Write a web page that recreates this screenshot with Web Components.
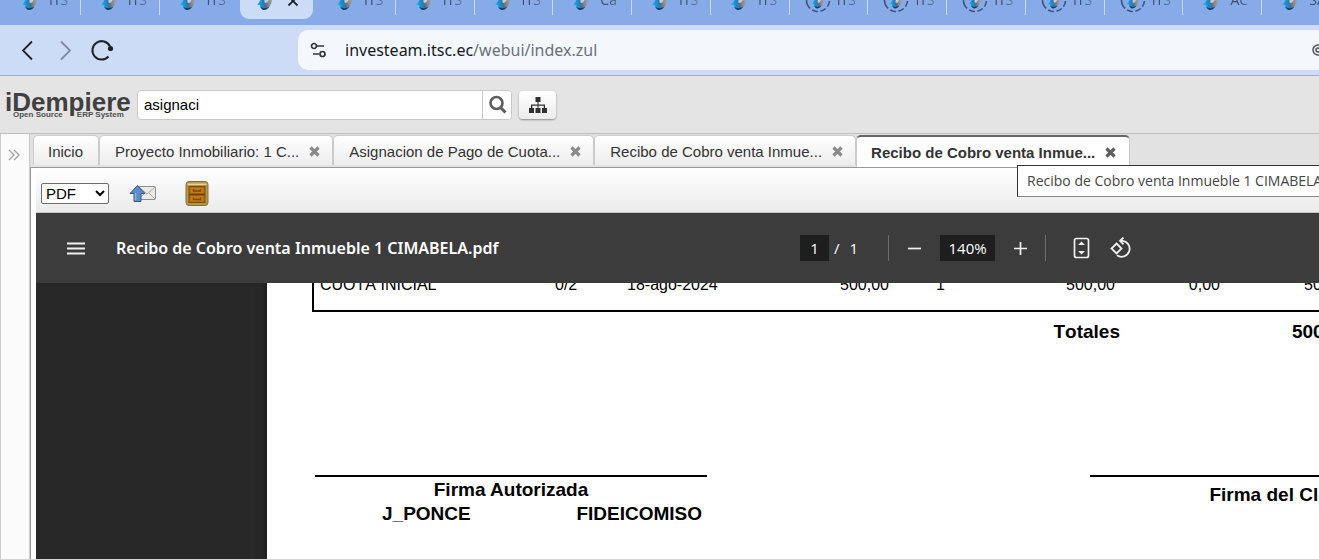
<!DOCTYPE html>
<html lang="es">
<head>
<meta charset="utf-8">
<title>iDempiere</title>
<style>
html,body{height:100%;margin:0}
body{font-family:"Liberation Sans",Arial,sans-serif;overflow:hidden;background:#fff}
</style>
</head>
<body>
<x-window></x-window>
<script>
const define=(name,html)=>{
  const t=document.createElement('template');
  t.innerHTML=html;
  customElements.define(name,class extends HTMLElement{
    constructor(){super();this.attachShadow({mode:'open'}).append(t.content.cloneNode(true));}
  });
};

define('browser-tab',`
<style>
:host{display:flex;align-items:center;height:35px;min-width:0;font:14px "Open Sans",sans-serif;color:#3f4f6c}
.box{display:flex;align-items:center;gap:11px;height:35px;padding-left:20px;flex:1;min-width:0;overflow:hidden}
svg{flex:none;overflow:visible}
.ring{display:none}
:host([loading]) .ring{display:block}
:host([loading]) .mark{transform:scale(.8);transform-origin:8px 8px}
.t{flex:none;width:20px;padding-bottom:5px;overflow:hidden;white-space:nowrap;-webkit-mask:linear-gradient(90deg,#000 40%,#0006);mask:linear-gradient(90deg,#000 40%,#0006)}
.sep{width:1px;height:26px;background:#c9dbf8}
button{display:none;border:0;background:none;padding:0 0 4px;width:14px;height:18px}
:host([active]) .box{background:#ccdcf7;border-radius:9px;margin:0 4px 0 2px;padding-left:17px;gap:13px}
:host([active]) .t,:host([active]) .sep,:host([before]) .sep{display:none}
:host([active]) button{display:block}
</style>
<div class="box">
<svg width="16" height="16" viewBox="0 0 16 16">
<defs><linearGradient id="g" x1="0" x2="1" y1=".5" y2=".3"><stop offset="0" stop-color="#18b4f4"/><stop offset=".3" stop-color="#158fd0"/><stop offset=".5" stop-color="#4b6b8c"/><stop offset=".7" stop-color="#85868c"/><stop offset="1" stop-color="#a5a3a6"/></linearGradient></defs>
<g class="mark"><path d="M0 10.500C2 9.500 3 6 6 3C9 0 13 0 14.500 2C15.500 5 15 9 13 12C11 15 8.500 16 6.500 16C4.500 15 3 13.500 3 11.200Z" fill="url(#g)"/><path d="M8.500 3C7.500 5.500 7 7 7.800 9C9.500 9.500 11.500 7.500 12 4.500Z" fill="#b9cbe8"/><path d="M3.200 12.500C5 14.500 9 14.800 12.300 12.800C10.500 15.300 8.500 16 6.500 16C4.800 15.300 3.600 14 3.200 12.500Z" fill="#103d66"/></g>
<circle class="ring" cx="8" cy="6" r="11.500" fill="none" stroke="#3f5578" stroke-width="1.600" stroke-dasharray="6 2.500 6 2.500 6 2.500 20 2.500 20 4" transform="rotate(5 8 6)"/></svg>
<span class="t"><slot></slot></span>
<button aria-label="Cerrar"><svg width="14" height="14" viewBox="0 0 14 14" style="display:block"><path d="M2.500 3.500l9 9M11.500 3.500l-9 9" stroke="#1c2230" stroke-width="1.800"/></svg></button>
</div><span class="sep"></span>`);

define('tab-strip',`
<style>
:host{display:block;height:25px;overflow:hidden;background:#86abe8}
nav{display:grid;grid-template-columns:repeat(17,minmax(0,1fr));margin:-16px -22px 0 2px}
</style><nav><slot></slot></nav>`);

define('address-bar',`
<style>
:host{display:flex;align-items:center;height:50px;background:#ccdcf7;border-bottom:1px solid #9db0d0;padding-left:16px;overflow:hidden;font:16px "Noto Sans",sans-serif}
button{border:0;background:none;padding:0;width:24px;height:24px;margin-right:13px;flex:none}
svg{display:block}
.f{flex:1;min-width:0;margin-left:171px;height:40px;border-radius:10px 0 0 10px;background:#f4f8fd;display:flex;align-items:center;color:#6c7178;overflow:hidden}
.f .s{margin:0 18px 0 12px}
a{color:inherit;text-decoration:none;flex:1;white-space:nowrap}
b{font-weight:400;color:#15181e}
.end{margin-right:-6px}
</style>
<button aria-label="Atrás"><svg width="24" height="24" viewBox="0 0 24 24" fill="none" stroke="#1f2229" stroke-width="1.800"><path d="M16 3.500L7 12.500l9 9"/></svg></button>
<button aria-label="Adelante"><svg width="24" height="24" viewBox="0 0 24 24" fill="none" stroke="#8089a0" stroke-width="1.800"><path d="M8 3.500l9 9-9 9"/></svg></button>
<button aria-label="Recargar"><svg width="24" height="24" viewBox="0 0 24 24" fill="none" stroke="#1f2229" stroke-width="2"><path d="M18.500 18.500A9.200 9.200 0 1 1 20 8.500"/><circle cx="20.500" cy="10.500" r="2.600" fill="#1f2229" stroke="none"/></svg></button>
<div class="f"><svg class="s" width="17" height="16" viewBox="0 0 17 16" fill="none" stroke="#30343b" stroke-width="1.700"><circle cx="4" cy="4" r="2.500"/><path d="M7 4h7M3 12h6"/><circle cx="12.500" cy="12" r="2.500"/></svg>
<a href="#"><b>investeam.itsc.ec</b>/webui/index.zul</a>
<svg class="end" width="14" height="14" viewBox="1 1 14 14" fill="none" stroke="#4c5057" stroke-width="1.500"><circle cx="8" cy="8" r="5"/><circle cx="8" cy="8" r="2"/></svg></div>`);

define('brand-logo',`
<style>
:host{display:block;width:126px;height:30px;color:#404040;font-weight:700}
.n{font-size:26px;line-height:24px;height:21px}
.s{font-size:8px;line-height:8px;padding-left:8px;display:flex;gap:14px;white-space:nowrap;color:#505050}
</style><div class="n">iDempiere</div><div class="s"><span>Open Source</span><span>ERP System</span></div>`);

define('app-header',`
<style>
:host{display:flex;align-items:center;height:57px;background:#e4e4e4;border-bottom:1px solid #bdbdbd;padding-left:5px}
.q{display:flex;margin:0 7px 0 6px;height:30px;box-sizing:border-box;border:1px solid #c9c9c9;border-radius:4px;background:#fff;overflow:hidden}
input{border:0;outline:0;width:332px;padding:0 6px;font:15px "Liberation Sans",Arial,sans-serif;color:#000;background:none}
.q button{border:0;border-left:1px solid #c9c9c9;background:#fff;width:29px;padding:0 0 0 5px}
svg{display:block}
.m{border:0;border-radius:4px;background:linear-gradient(#fff,#ececec);width:37px;height:28px;padding:0 0 0 10px;box-shadow:0 1px 2px #0006}
</style>
<brand-logo></brand-logo>
<div class="q"><input aria-label="Buscar" value="asignaci"><button aria-label="Buscar"><svg width="19" height="19" viewBox="0 0 19 19" fill="none" stroke="#5c5c5c"><circle cx="8.500" cy="8" r="6" stroke-width="2.600"/><path d="M12.500 12.500l5 5" stroke-width="3"/></svg></button></div>
<button class="m" aria-label="Menú"><svg width="18" height="16" viewBox="0 0 18 16" fill="#303030"><path d="M6.500 0h5v5h-2v2.500H16V11h2v5h-5v-5h1.700V8.700H9.500V11h2v5h-5v-5h2V8.700H3.300V11H5v5H0v-5h2V7.500h6.500V5h-2z"/></svg></button>`);

define('window-tab',`
<style>
:host{display:flex;align-items:center;box-sizing:border-box;height:30px;position:relative;border:1px solid #cbcbcb;border-bottom:0;border-radius:5px 5px 0 0;background:linear-gradient(#fff,#ededed);padding:2px 12px 0 15px;gap:10px;white-space:nowrap;font-size:15px;color:#333}
:host([active]){height:32px;border-top:2px solid #666;background:#fff;font-weight:700;z-index:1;padding:0 13px 0 14px}
:host([plain]){padding:2px 15px 0 14px}
button{border:0;background:none;padding:0}
:host([plain]) button{display:none}
svg{display:block;color:#8a8a8a}
:host([active]) svg{color:#5f5f5f}
</style><span><slot></slot></span><button aria-label="Cerrar"><svg width="11" height="11" viewBox="0 0 11 11"><path d="M1.500 1.500l8 8M9.500 1.500l-8 8" stroke="currentColor" stroke-width="3.200"/></svg></button><slot name="tip"></slot>`);

define('tool-tip',`
<style>:host{position:absolute;left:160px;top:28px;z-index:5;box-sizing:border-box;height:32px;padding:0 9px;border:1px solid #333;border-bottom-color:#888;background:#fff;color:#444;font:400 14px/30px "Open Sans",sans-serif;white-space:nowrap}</style><slot></slot>`);

define('report-toolbar',`
<style>
:host{display:flex;align-items:center;height:45px;padding:7px 0 0 5px;box-sizing:border-box;border-bottom:1px solid #c8c8c8;background:linear-gradient(#fff,#ebebeb)}
select{width:68px;height:21px;font:15px "Liberation Sans",Arial,sans-serif;border:1px solid #6c6c6c;border-radius:2px;background:#fff;color:#000;padding:0}
button{border:0;background:none;padding:0}
svg{display:block}
.a{margin-left:20px}.b{margin-left:28px}
</style>
<select aria-label="Formato"><option>PDF</option></select>
<button class="a" aria-label="Enviar por correo"><svg width="27" height="20" viewBox="0 0 27 20"><rect x="9.500" y="2.500" width="17" height="13" rx="1" fill="#e9e9e6" stroke="#8e8e8e"/><path d="M10 3l8 7 8-7M10 15l6-6M26 15l-6-6" fill="none" stroke="#aaa"/><path d="M8.500 1.500L1 9.500H5v8h7v-8h4z" fill="#5f8cc9" stroke="#31578f"/><path d="M6.500 9v7" stroke="#8fb4e2" stroke-width="1.500"/></svg></button>
<button class="b" aria-label="Archivar"><svg width="26" height="27" viewBox="0 0 26 27"><rect x="2" y="1.500" width="22" height="24" rx="3" fill="#b4954e" stroke="#86743c"/><path d="M3.500 5V3.500h19V5z" fill="#e3d3a0"/><rect x="5" y="6.500" width="16" height="16" fill="#b06a0c" stroke="#7a500e"/><path d="M5 14.500h16" stroke="#694008" stroke-width="1.500"/><path d="M6.500 8h13v5h-13zM6.500 16h13v5.500h-13z" fill="#c47a17"/><path d="M9.500 9v2h7V9M9.500 17.500v2h7v-2" fill="none" stroke="#7a4a0a" stroke-width="1.300"/></svg></button>`);

define('pdf-toolbar',`
<style>
:host{display:grid;grid-template-columns:764px auto;align-items:center;height:70px;background:#3c3c3c;color:#fff;font:15px "Open Sans",sans-serif;position:relative;z-index:1;overflow:hidden}
.l,.c{display:flex;align-items:center}
.l{padding-left:30px;gap:30px;white-space:nowrap;min-width:0}
h1{margin:0;font:600 16px "Noto Sans",sans-serif}
button{border:0;background:none;padding:0;color:#f0f0f0}
svg{display:block}
input{box-sizing:border-box;height:26px;border:0;padding:0;background:#1e1e1e;color:#fff;font:inherit;text-align:center}
.p{width:29px}.z{width:55px;margin:0 18px}
.of{margin:0 30px 0 5px;display:flex;gap:10px}
i{width:1px;height:26px;background:#6e6e6e}
.m{margin-left:18px}.fit{margin:0 20px 0 27px}.i2{margin-left:17px}
</style>
<div class="l"><button aria-label="Contenido"><svg width="20" height="13" viewBox="0 0 20 13" stroke="currentColor" stroke-width="1.800"><path d="M1 1.500h18M1 6.500h18M1 11.500h18"/></svg></button><h1>Recibo de Cobro venta Inmueble 1 CIMABELA.pdf</h1></div>
<div class="c"><input class="p" aria-label="Página" value="1"><span class="of"><span>/</span><span>1</span></span><i></i>
<button class="m" aria-label="Alejar"><svg width="15" height="15" viewBox="0 0 15 15" stroke="currentColor" stroke-width="1.700"><path d="M1 7.500h13"/></svg></button>
<input class="z" aria-label="Zoom" value="140%">
<button aria-label="Acercar"><svg width="15" height="15" viewBox="0 0 15 15" stroke="currentColor" stroke-width="1.700"><path d="M1 7.500h13M7.500 1v13"/></svg></button><i class="i2"></i>
<button class="fit" aria-label="Ajustar a la página"><svg width="17" height="22" viewBox="0 0 17 22" fill="none" stroke="currentColor" stroke-width="1.700"><rect x="1.500" y="1.500" width="14" height="19" rx="2"/><path d="M5 8h7L8.500 4.500zM5 14h7l-3.500 3.500z" fill="currentColor" stroke="none"/></svg></button>
<button aria-label="Girar"><svg width="22" height="22" viewBox="0 0 22 22" fill="none" stroke="currentColor" stroke-width="1.800"><path d="M6.500 6.500l5 5-5 5-5-5zM10 3.800h2.500a8 8 0 1 1-5.500 14.500M13.500.500L10 3.800l3.500 3.500"/></svg></button></div>`);

define('signature-block',`
<style>
:host{display:block;flex:none;width:392px;border-top:2px solid #000;font-size:19px;line-height:24px;font-weight:700;text-align:center}
div{padding-top:1px}
:host([low]) div{padding-top:6px}
</style><div><slot></slot></div><slot name="names"></slot>`);

define('pdf-page',`
<style>
:host{display:flex;flex:1;min-width:0;overflow:hidden;background:#282828;color:#000}
.page{margin:-7px 0 0 231px;padding-left:45px;flex:1;min-width:0;background:#fff;box-shadow:0 0 8px #0008}
table{table-layout:fixed;width:1041px;border-collapse:separate;border-spacing:0;font-size:16px;line-height:18px;font-kerning:none}
td{padding:0;white-space:nowrap}
tbody td{height:34px;vertical-align:top;border-bottom:2px solid #000}
tbody td:first-child{border-left:2px solid #000;padding-left:6px}
.r{text-align:right}
tfoot td{font-size:19px;font-weight:700;line-height:24px;height:24px;padding-top:8px}
tfoot td:last-child{padding-right:3px}
.sg{display:flex;gap:383px;padding-left:3px;margin-top:131px}
.n{display:flex;justify-content:space-between;padding:0 5px 0 67px}
</style>
<div class="page">
<table><colgroup><col style="width:243px"><col style="width:72px"><col style="width:140px"><col style="width:122px"><col style="width:111px"><col style="width:120px"><col style="width:100px"><col style="width:133px"></colgroup>
<tbody><tr><td>CUOTA INICIAL</td><td>0/2</td><td>18-ago-2024</td><td class="r">500,00</td><td style="padding-left:47px">1</td><td class="r" style="padding-right:5px">500,00</td><td class="r">0,00</td><td class="r">500,00</td></tr></tbody>
<tfoot><tr><td colspan="6" class="r">Totales</td><td></td><td class="r">500,00</td></tr></tfoot></table>
<div class="sg"><signature-block>Firma Autorizada<div class="n" slot="names"><span>J_PONCE</span><span>FIDEICOMISO</span></div></signature-block><signature-block low>Firma del Cliente</signature-block></div>
</div>`);

define('x-window',`
<style>
:host{display:flex;flex-direction:column;height:100vh;overflow:hidden}
tab-strip,address-bar,app-header{flex:none}
.w{flex:1;display:flex;min-height:0}
aside{width:28px;flex:none;border:solid #cbcbcb;border-width:0 1px;background:#fbfbfb;box-sizing:content-box}
aside button{display:block;border:0;background:none;padding:0;margin:15px 0 0 7px}
main{flex:1;min-width:0;display:flex;flex-direction:column}
.t{display:flex;height:33px;padding:1px 0 0 3px;box-sizing:border-box;background:#e2e2e2;flex:none}
.b{flex:1;min-height:0;border:solid #999;border-width:1px 0 0 1px;padding-left:5px;display:flex;flex-direction:column}
report-toolbar,pdf-toolbar{flex:none}
</style>
<tab-strip><browser-tab>ITS</browser-tab><browser-tab>ITS</browser-tab><browser-tab before>ITS</browser-tab><browser-tab active></browser-tab><browser-tab>ITS</browser-tab><browser-tab>ITS</browser-tab><browser-tab>ITS</browser-tab><browser-tab>Ca</browser-tab><browser-tab>ITS</browser-tab><browser-tab>ITS</browser-tab><browser-tab loading>ITS</browser-tab><browser-tab loading>ITS</browser-tab><browser-tab loading>ITS</browser-tab><browser-tab loading>ITS</browser-tab><browser-tab loading>ITS</browser-tab><browser-tab>AC</browser-tab><browser-tab>SA</browser-tab></tab-strip>
<address-bar></address-bar>
<app-header></app-header>
<div class="w"><aside><button aria-label="Expandir"><svg width="12" height="12" viewBox="0 0 12 12" fill="none" stroke="#a5a5a5" stroke-width="1.400" style="display:block"><path d="M1 1l5 5-5 5M6 1l5 5-5 5"/></svg></button></aside>
<main><div class="t"><window-tab plain>Inicio</window-tab><window-tab>Proyecto Inmobiliario: 1 C...</window-tab><window-tab>Asignacion de Pago de Cuota...</window-tab><window-tab>Recibo de Cobro venta Inmue...</window-tab><window-tab active>Recibo de Cobro venta Inmue...<tool-tip slot="tip">Recibo de Cobro venta Inmueble 1 CIMABELA</tool-tip></window-tab></div>
<div class="b"><report-toolbar></report-toolbar><pdf-toolbar></pdf-toolbar><pdf-page></pdf-page></div></main></div>`);
</script>
</body>
</html>
